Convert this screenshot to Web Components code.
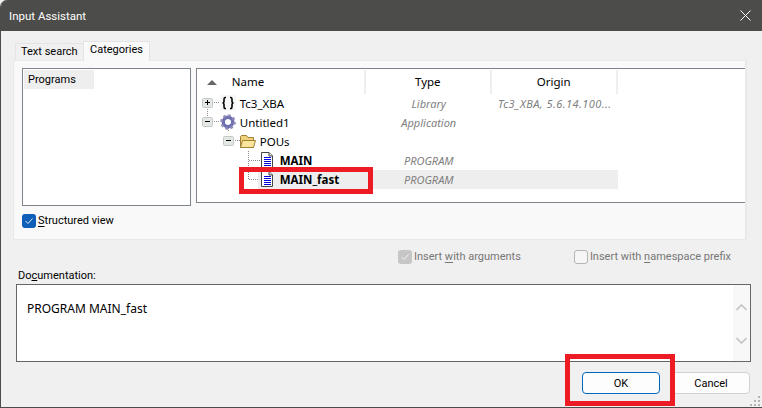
<!DOCTYPE html>
<html>
<head>
<meta charset="utf-8">
<title>Input Assistant</title>
<style>
    html, body { margin: 0; padding: 0; background: #f0f0f0; }
    body { font: 11px Roboto, "Noto Sans", sans-serif; color: #000; }
    u { text-underline-offset: 2px; }
</style>
</head>
<body>
<input-assistant>
    <tab-strip slot="tabs" active="Categories"></tab-strip>
    <category-list slot="categories">Programs</category-list>
    <tree-view slot="tree">
        <tree-row level="0" expander="plus" icon="braces" kind="Library" origin="Tc3_XBA, 5.6.14.100..." lines="down">Tc3_XBA</tree-row>
        <tree-row level="0" expander="minus" icon="gear" kind="Application" lines="up stem">Untitled1</tree-row>
        <tree-row level="1" expander="minus" icon="folder">POUs</tree-row>
        <tree-row level="2" icon="doc" kind="PROGRAM" bold lines="branch">MAIN</tree-row>
        <tree-row level="2" icon="doc" kind="PROGRAM" bold selected lines="last">MAIN_fast</tree-row>
    </tree-view>
    <check-box slot="structured" state="on"><u>S</u>tructured view</check-box>
    <check-box slot="options" state="disabled">Insert <u>w</u>ith arguments</check-box>
    <check-box slot="options" state="off">Insert with <u>n</u>amespace prefix</check-box>
    <dialog-button slot="buttons" primary>OK</dialog-button>
    <dialog-button slot="buttons">Cancel</dialog-button>
</input-assistant>

<script>
const ICONS = {
    braces: `<rect x="0" y="0" width="16" height="16" fill="#f7f7f7"/>
        <path d="M6 2.5H5C4 2.5 4 3.5 4 4.5V6.5C4 7.5 3.5 8 2.5 8C3.5 8 4 8.5 4 9.5V11.5C4 12.5 4 13.5 5 13.5H6M10 2.5H11C12 2.5 12 3.5 12 4.5V6.5C12 7.5 12.5 8 13.5 8C12.5 8 12 8.5 12 9.5V11.5C12 12.5 12 13.5 11 13.5H10" fill="none" stroke="#000" stroke-width="1.6"/>`,
    gear: `<circle cx="8" cy="8" r="4.6" fill="none" stroke="#7070ae" stroke-width="3.6"/>
        <circle cx="8" cy="8" r="6.6" fill="none" stroke="#8c8cbc" stroke-width="2.4" stroke-dasharray="2.6 2.58"/>
        <circle cx="8" cy="8" r="2.8" fill="#fff"/>`,
    folder: `<path d="M.5 14.5V3.5L1.5 2.5H6.5L8 4.5H13.5V14.5Z" fill="#f0d078" stroke="#a08238"/>
        <path d="M.5 14.5L2.5 7.5H15.5L13.5 14.5Z" fill="#fbe59c" stroke="#a08238"/>`,
    doc: `<path d="M.5.5H8L11.5 4V15.5H.5Z" fill="#fff" stroke="#444"/>
        <path d="M8 .5V4H11.5" fill="#ddd" stroke="#444"/>
        <path d="M3 5.5H10M3 7.5H10M3 9.5H10M3 11.5H10M3 13.5H10" stroke="#0000e0"/>`
};

const EXPANDER_X = [10, 31];
const ICON_X = [23, 43, 64];

// draws the expander, dotted connectors and icon of one row, in row coordinates
function gutter(level, expander, icon, lines, selected) {
    const w = 43 + 20 * level;
    let s = '';
    const dot = d => `<path d="${d}" fill="none" stroke="#8c8c8c" stroke-dasharray="1 1"/>`;
    if (selected) s += `<rect x="61" y="0" width="${w - 61}" height="19" fill="#eee"/>`;
    if (lines.includes('down')) s += dot('M10.5 13V19');
    if (lines.includes('up')) s += dot('M10.5 0V5');
    if (lines.includes('stem')) s += dot('M31.5 15V19');
    if (lines.includes('branch')) s += dot('M51.5 0V19M52 9.5H63');
    if (lines.includes('last')) s += dot('M51.5 0V9.5M52 9.5H61');
    if (expander) {
        const x = EXPANDER_X[level];
        s += dot(`M${x + 5} 8.5H${x + 12}`);
        s += `<rect x="${x - 4.5}" y="4.5" width="10" height="9" rx="1" fill="#e4e8e4" stroke="#c4c8c4"/>
            <path d="M${x - 2} 8.5H${x + 3}${expander === 'plus' ? `M${x + .5} 6V11` : ''}" stroke="#000"/>`;
    }
    s += `<g transform="translate(${ICON_X[level]} 1)">${ICONS[icon]}</g>`;
    return `<svg width="${w}" height="19" viewBox="0 0 ${w} 19">${s}</svg>`;
}

class InputAssistant extends HTMLElement {
    constructor() {
        super();
        this.attachShadow({ mode: 'open' });
        this.shadowRoot.innerHTML = `
            <style>
                :host { display: flex; flex-direction: column; position: relative; box-sizing: border-box;
                    width: 762px; height: 408px; overflow: hidden; background: #f0f0f0;
                    border-left: 1px solid #4c4c4a; border-bottom: 1px solid #4c4c4a; border-top-left-radius: 7px; }
                .title { display: flex; align-items: center; justify-content: space-between; flex: none;
                    height: 31px; margin-left: -1px; padding: 0 11px 0 9px; background: #4c4c4a; color: #fff; font-size: 11.5px; }
                .tabs { margin: 10px 0 0 14px; height: 19px; flex: none; }
                .panel { display: flex; flex-direction: column; flex: none; box-sizing: border-box;
                    height: 180px; margin: 0 15px 0 12px; padding: 7px 0 0 8px; background: #f9f9f9;
                    border: 1px solid #e9e9e9; border-right-width: 2px; }
                .top { display: flex; align-items: flex-start; gap: 5px; height: 138px; flex: none; }
                .structured { margin-top: 8px; }
                .options { display: flex; justify-content: flex-end; gap: 53px; flex: none; height: 14px;
                    margin: 10px 31px 0 0; }
                .label { margin: 4px 0 0 17px; height: 15px; line-height: 15px; flex: none; }
                .doc { display: flex; flex: none; height: 78px; box-sizing: border-box; margin: 1px 11px 0 15px;
                    border: 1px solid #666; background: #fff; }
                .doc p { flex: 1; margin: 15px 0 0 10px; font: 12px "Noto Sans", sans-serif; }
                .scroll { display: flex; flex-direction: column; justify-content: space-between; align-items: center;
                    width: 17px; padding: 19px 0 17px; box-sizing: border-box; background: #f8f8f8; }
                .buttons { display: flex; gap: 12px; justify-content: flex-end; margin: 10px 12px 0 0; flex: none; }
                .grip { position: absolute; right: 2px; bottom: 1px; }
                svg { display: block; }
            </style>
            <div class="title">
                <span>Input Assistant</span>
                <svg width="11" height="11" viewBox="0 0 11 11"><path d="M.5.5L10.5 10.5M10.5.5L.5 10.5" stroke="#fff"/></svg>
            </div>
            <div class="tabs"><slot name="tabs"></slot></div>
            <div class="panel">
                <div class="top">
                    <slot name="categories"></slot>
                    <slot name="tree"></slot>
                </div>
                <div class="structured"><slot name="structured"></slot></div>
            </div>
            <div class="options"><slot name="options"></slot></div>
            <div class="label">Do<u>c</u>umentation:</div>
            <div class="doc">
                <p>PROGRAM MAIN_fast</p>
                <div class="scroll">
                    <svg width="11" height="7" viewBox="0 0 11 7"><path d="M.5 6L5.5 1L10.5 6" fill="none" stroke="#c4c4c4" stroke-width="1.6"/></svg>
                    <svg width="11" height="7" viewBox="0 0 11 7"><path d="M.5 1L5.5 6L10.5 1" fill="none" stroke="#c4c4c4" stroke-width="1.6"/></svg>
                </div>
            </div>
            <div class="buttons"><slot name="buttons"></slot></div>
            <svg class="grip" width="10" height="10" viewBox="0 0 10 10" fill="#b4b4b4">
                <rect x="8" y="0" width="2" height="2"/><rect x="4" y="4" width="2" height="2"/><rect x="8" y="4" width="2" height="2"/>
                <rect x="0" y="8" width="2" height="2"/><rect x="4" y="8" width="2" height="2"/><rect x="8" y="8" width="2" height="2"/>
            </svg>
            <mark-box style="left:238px;top:167px;width:134px;height:27px"></mark-box>
            <mark-box style="left:564px;top:354px;width:110px;height:52px"></mark-box>
        `;
    }
}

class TabStrip extends HTMLElement {
    constructor() {
        super();
        this.attachShadow({ mode: 'open' });
        this.shadowRoot.innerHTML = `
            <style>
                :host { display: flex; align-items: flex-end; height: 19px; }
                div { box-sizing: border-box; border: 1px solid #e4e4e4; border-bottom: 0; line-height: 16px; }
                .off { width: 68px; height: 17px; padding-left: 5px; background: #f0f0f0; border-right: 0; }
                .on { width: 67px; height: 20px; padding-left: 6px; background: #f9f9f9; position: relative; top: 1px; line-height: 16px; }
            </style>
            <div class="off">Text search</div>
            <div class="on">Categories</div>
        `;
    }
}

class CategoryList extends HTMLElement {
    constructor() {
        super();
        this.attachShadow({ mode: 'open' });
        this.shadowRoot.innerHTML = `
            <style>
                :host { display: block; box-sizing: border-box; width: 169px; height: 138px; padding: 1px;
                    background: #fff; border: 1px solid #7f858c; }
                div { width: 70px; height: 19px; line-height: 19px; padding-left: 4px; box-sizing: border-box; background: #eee; }
            </style>
            <div><slot></slot></div>
        `;
    }
}

class TreeView extends HTMLElement {
    constructor() {
        super();
        this.attachShadow({ mode: 'open' });
        this.shadowRoot.innerHTML = `
            <style>
                :host { display: block; box-sizing: border-box; width: 550px; height: 135px; background: #fff;
                    font: 11.5px "Noto Sans", sans-serif; border: 1px solid #7f858c; border-right: 0; padding-top: 1px; }
                .head { display: grid; grid-template-columns: 169px 126px 126px; height: 24px; line-height: 24px; }
                .head div { border-right: 2px solid #eee; text-align: center; box-sizing: border-box; }
                .head .name { display: flex; align-items: center; gap: 15px; padding-left: 10px; text-align: left; }
            </style>
            <div class="head">
                <div class="name"><svg width="10" height="5" viewBox="0 0 10 5"><path d="M0 5L5 0L10 5Z" fill="#666"/></svg><span>Name</span></div>
                <div>Type</div>
                <div>Origin</div>
            </div>
            <slot></slot>
        `;
    }
}

class TreeRow extends HTMLElement {
    constructor() {
        super();
        this.attachShadow({ mode: 'open' });
    }

    connectedCallback() {
        const level = Number(this.getAttribute('level'));
        const kind = this.getAttribute('kind') || '';
        const origin = this.getAttribute('origin') || '';
        const lines = (this.getAttribute('lines') || '').split(' ');
        const bold = this.hasAttribute('bold');
        const selected = this.hasAttribute('selected');
        this.shadowRoot.innerHTML = `
            <style>
                :host { display: grid; grid-template-columns: 169px 126px 126px; height: 19px; line-height: 19px; }
                .name { display: flex; align-items: center; white-space: nowrap; }
                .label { flex: 1; align-self: stretch; ${bold ? 'font-weight: 700;' : ''} }
                .cell { text-align: center; font-style: italic; color: #808080; white-space: nowrap; font-size: 11px; }
                .origin { letter-spacing: .45px; }
                .sel { background: #eee; }
                svg { flex: none; }
            </style>
            <div class="name">${gutter(level, this.getAttribute('expander'), this.getAttribute('icon'), lines, selected)}<span class="label ${selected ? 'sel' : ''}"><slot></slot></span></div>
            <div class="cell ${selected ? 'sel' : ''}">${kind}</div>
            <div class="cell origin ${selected ? 'sel' : ''}">${origin}</div>
        `;
    }
}

class CheckBox extends HTMLElement {
    constructor() {
        super();
        this.attachShadow({ mode: 'open' });
    }

    connectedCallback() {
        const state = this.getAttribute('state');
        const box = {
            on: `<rect x="0" y="0" width="14" height="14" rx="3" fill="#0f5fb8"/><path d="M3.5 7L6 9.5L10.5 4.5" fill="none" stroke="#dfe9f5" stroke-width="1"/>`,
            disabled: `<rect x="0" y="0" width="14" height="14" rx="3" fill="#c6c6c6"/><path d="M3.5 7L6 9.5L10.5 4.5" fill="none" stroke="#f4f4f4" stroke-width="1"/>`,
            off: `<rect x=".5" y=".5" width="13" height="13" rx="2.5" fill="#f6f6f6" stroke="#b4b4b4"/>`
        }[state];
        this.shadowRoot.innerHTML = `
            <style>
                :host { display: inline-flex; align-items: center; gap: 2px; height: 14px; line-height: 14px;
                    color: ${state === 'on' ? '#000' : '#777'}; white-space: nowrap; }
            </style>
            <svg width="14" height="14" viewBox="0 0 14 14">${box}</svg>
            <span><slot></slot></span>
        `;
    }
}

class DialogButton extends HTMLElement {
    constructor() {
        super();
        this.attachShadow({ mode: 'open' });
        this.shadowRoot.innerHTML = `
            <style>
                :host { display: flex; align-items: center; justify-content: center; box-sizing: border-box;
                    width: 78px; height: 22px; background: #fdfdfd; border: 1px solid #d0d0d0; border-radius: 4px; }
                :host([primary]) { border-color: #0067c0; }
            </style>
            <slot></slot>
        `;
    }
}

class MarkBox extends HTMLElement {
    constructor() {
        super();
        this.attachShadow({ mode: 'open' });
        this.shadowRoot.innerHTML = `
            <style>
                :host { display: block; position: absolute; box-sizing: border-box; border: 5px solid #ed1c24; }
            </style>
        `;
    }
}

customElements.define('input-assistant', InputAssistant);
customElements.define('tab-strip', TabStrip);
customElements.define('category-list', CategoryList);
customElements.define('tree-view', TreeView);
customElements.define('tree-row', TreeRow);
customElements.define('check-box', CheckBox);
customElements.define('dialog-button', DialogButton);
customElements.define('mark-box', MarkBox);
</script>
</body>
</html>
